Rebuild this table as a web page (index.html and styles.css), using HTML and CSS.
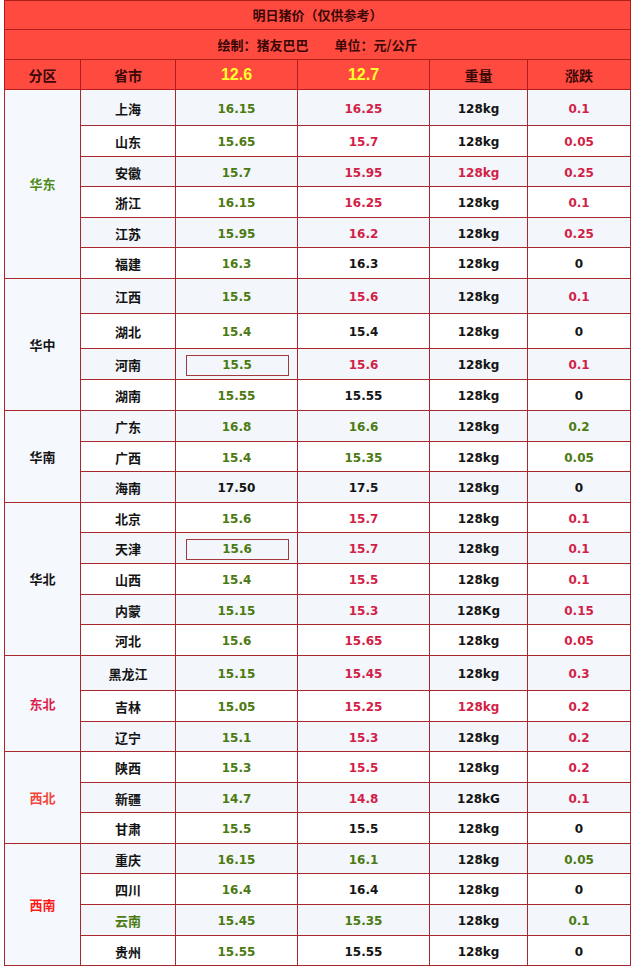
FILE: index.html
```html
<!DOCTYPE html>
<html lang="zh-CN">
<head>
<meta charset="utf-8">
<title>明日猪价</title>
<link rel="stylesheet" href="styles.css">
</head>
<body>
<table class="price-table">
  <colgroup>
    <col class="c-zone"><col class="c-prov"><col class="c-d1"><col class="c-d2"><col class="c-wt"><col class="c-chg">
  </colgroup>
  <thead>
    <tr class="h29"><th colspan="6" class="title">明日猪价（仅供参考）</th></tr>
    <tr class="h30"><th colspan="6" class="title">绘制：猪友巴巴<span class="gap"></span>单位：元/公斤</th></tr>
    <tr class="h30 head">
      <th>分区</th><th>省市</th><th class="date">12.6</th><th class="date">12.7</th><th>重量</th><th>涨跌</th>
    </tr>
  </thead>
  <tbody>
    <tr class="h36 alt"><td rowspan="6" class="zone green">华东</td><td>上海</td><td class="g">16.15</td><td class="r">16.25</td><td>128kg</td><td class="r">0.1</td></tr>
    <tr class="h31"><td>山东</td><td class="g">15.65</td><td class="r">15.7</td><td>128kg</td><td class="r">0.05</td></tr>
    <tr class="h30 alt"><td>安徽</td><td class="g">15.7</td><td class="r">15.95</td><td class="r">128kg</td><td class="r">0.25</td></tr>
    <tr class="h31"><td>浙江</td><td class="g">16.15</td><td class="r">16.25</td><td>128kg</td><td class="r">0.1</td></tr>
    <tr class="h30 alt"><td>江苏</td><td class="g">15.95</td><td class="r">16.2</td><td>128kg</td><td class="r">0.25</td></tr>
    <tr class="h31"><td>福建</td><td class="g">16.3</td><td>16.3</td><td>128kg</td><td>0</td></tr>

    <tr class="h35 alt"><td rowspan="4" class="zone">华中</td><td>江西</td><td class="g">15.5</td><td class="r">15.6</td><td>128kg</td><td class="r">0.1</td></tr>
    <tr class="h35"><td>湖北</td><td class="g">15.4</td><td>15.4</td><td>128kg</td><td>0</td></tr>
    <tr class="h31 alt"><td>河南</td><td class="g"><span class="box">15.5</span></td><td class="r">15.6</td><td>128kg</td><td class="r">0.1</td></tr>
    <tr class="h31"><td>湖南</td><td class="g">15.55</td><td>15.55</td><td>128kg</td><td>0</td></tr>

    <tr class="h31 alt"><td rowspan="3" class="zone">华南</td><td>广东</td><td class="g">16.8</td><td class="g">16.6</td><td>128kg</td><td class="g">0.2</td></tr>
    <tr class="h30"><td>广西</td><td class="g">15.4</td><td class="g">15.35</td><td>128kg</td><td class="g">0.05</td></tr>
    <tr class="h31 alt"><td>海南</td><td>17.50</td><td>17.5</td><td>128kg</td><td>0</td></tr>

    <tr class="h30"><td rowspan="5" class="zone">华北</td><td>北京</td><td class="g">15.6</td><td class="r">15.7</td><td>128kg</td><td class="r">0.1</td></tr>
    <tr class="h31 alt"><td>天津</td><td class="g"><span class="box">15.6</span></td><td class="r">15.7</td><td>128kg</td><td class="r">0.1</td></tr>
    <tr class="h31"><td>山西</td><td class="g">15.4</td><td class="r">15.5</td><td>128kg</td><td class="r">0.1</td></tr>
    <tr class="h30 alt"><td>内蒙</td><td class="g">15.15</td><td class="r">15.3</td><td>128Kg</td><td class="r">0.15</td></tr>
    <tr class="h31"><td>河北</td><td class="g">15.6</td><td class="r">15.65</td><td>128kg</td><td class="r">0.05</td></tr>

    <tr class="h35 alt"><td rowspan="3" class="zone crimson">东北</td><td>黑龙江</td><td class="g">15.15</td><td class="r">15.45</td><td>128kg</td><td class="r">0.3</td></tr>
    <tr class="h31"><td>吉林</td><td class="g">15.05</td><td class="r">15.25</td><td class="r">128kg</td><td class="r">0.2</td></tr>
    <tr class="h30 alt"><td>辽宁</td><td class="g">15.1</td><td class="r">15.3</td><td>128kg</td><td class="r">0.2</td></tr>

    <tr class="h31"><td rowspan="3" class="zone orange">西北</td><td>陕西</td><td class="g">15.3</td><td class="r">15.5</td><td>128kg</td><td class="r">0.2</td></tr>
    <tr class="h30 alt"><td>新疆</td><td class="g">14.7</td><td class="r">14.8</td><td>128kG</td><td class="r">0.1</td></tr>
    <tr class="h31"><td>甘肃</td><td class="g">15.5</td><td>15.5</td><td>128kg</td><td>0</td></tr>

    <tr class="h30 alt"><td rowspan="4" class="zone red">西南</td><td>重庆</td><td class="g">16.15</td><td class="g">16.1</td><td>128kg</td><td class="g">0.05</td></tr>
    <tr class="h31"><td>四川</td><td class="g">16.4</td><td>16.4</td><td>128kg</td><td>0</td></tr>
    <tr class="h31 alt"><td class="g">云南</td><td class="g">15.45</td><td class="g">15.35</td><td>128kg</td><td class="g">0.1</td></tr>
    <tr class="h30"><td>贵州</td><td class="g">15.55</td><td>15.55</td><td>128kg</td><td>0</td></tr>
  </tbody>
</table>
</body>
</html>
```

FILE: styles.css
```css
html, body {
  margin: 0;
  padding: 0;
  background: #ffffff;
}

body {
  padding-left: 4px;
}

.price-table {
  width: 626px;
  border-collapse: collapse;
  table-layout: fixed;
  font-family: "DejaVu Sans", "Noto Sans CJK SC", sans-serif;
  font-weight: bold;
  font-size: 12px;
  color: #141414;
  border: 1px solid #a0383a;
}

.c-zone { width: 76px; }
.c-prov { width: 95px; }
.c-d1 { width: 122px; }
.c-d2 { width: 132px; }
.c-wt { width: 98px; }
.c-chg { width: 103px; }

th, td {
  padding: 0;
  text-align: center;
  vertical-align: middle;
  line-height: 14px;
}

th {
  background: #ff4b3f;
  border: 1px solid #b01e1c;
  color: #3a0808;
  font-family: "Noto Sans CJK SC", sans-serif;
  font-size: 13px;
}

.title {
  font-size: 13px;
}

.gap {
  display: inline-block;
  width: 26px;
}

.head th {
  font-size: 14px;
}

.head th.date {
  font-family: "Liberation Sans", sans-serif;
  font-size: 16px;
  color: #ffff2e;
}

td {
  border: 1px solid #a8282e;
  background: #ffffff;
  padding-top: 2px;
}

tr.alt td {
  background: #f3f7fb;
}

td.zone,
tr.alt td.zone {
  background: #f5f9fd;
  font-family: "Noto Sans CJK SC", sans-serif;
  font-size: 13px;
  padding-top: 0;
}

td:nth-child(1),
td.zone + td {
  font-family: "Noto Sans CJK SC", sans-serif;
  font-size: 13px;
}

.h29 { height: 29px; }
.h30 { height: 30px; }
.h31 { height: 31px; }
.h35 { height: 35px; }
.h36 { height: 36px; }

.g { color: #4c7a12; }
.r { color: #d21f48; }
.green { color: #4f8a1a; }
.crimson { color: #dc1f4f; }
.orange { color: #f2453a; }
.red { color: #ff1a1a; }

.box {
  display: inline-block;
  box-sizing: border-box;
  width: 103px;
  height: 21px;
  line-height: 19px;
  border: 1px solid #a3383e;
  margin-left: 1px;
}
```
